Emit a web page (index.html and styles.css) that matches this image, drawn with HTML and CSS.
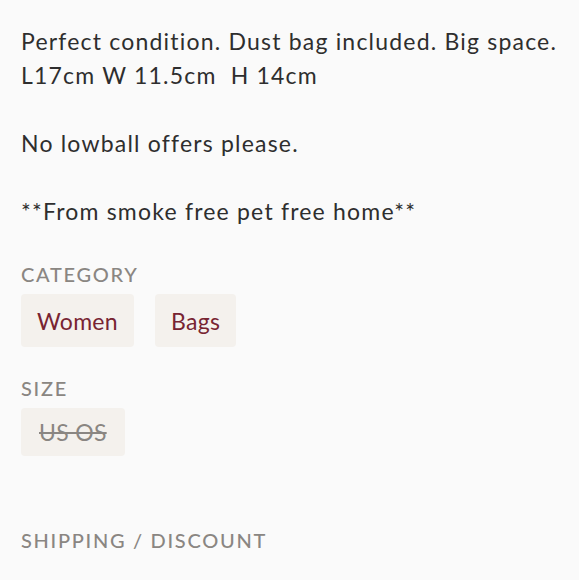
FILE: index.html
```html
<!DOCTYPE html>
<html>
<head>
<meta charset="utf-8">
<link rel="stylesheet" href="styles.css">
</head>
<body>
<main class="listing">
  <p class="description">Perfect condition. Dust bag included. Big space.
L17cm W 11.5cm  H 14cm

No lowball offers please.

**From smoke free pet free home**</p>

  <section class="section section-category">
    <h3 class="label">Category</h3>
    <div class="chips">
      <span class="chip chip-link chip-women">Women</span>
      <span class="chip chip-link chip-bags">Bags</span>
    </div>
  </section>

  <section class="section section-size">
    <h3 class="label">Size</h3>
    <div class="chips">
      <span class="chip chip-size">US OS</span>
    </div>
  </section>

  <section class="section section-shipping">
    <h3 class="label">Shipping / Discount</h3>
  </section>
</main>
</body>
</html>
```

FILE: styles.css
```css
html, body {
  margin: 0;
  padding: 0;
  background: #fafafa;
}

.listing {
  padding: 24px 0 0 21px;
  font-family: Lato, "Noto Sans", sans-serif;
  color: #2e2e2e;
}

.description {
  margin: 0;
  white-space: pre;
  font-size: 23px;
  line-height: 34px;
  font-weight: 400;
  letter-spacing: 1.2px;
}

.section-category {
  margin-top: 36px;
}

.section-size {
  margin-top: 31px;
}

.section-shipping {
  margin-top: 74px;
}

.label {
  margin: 0;
  font-size: 20px;
  line-height: 20px;
  font-weight: 500;
  text-transform: uppercase;
  letter-spacing: 1.7px;
  color: #8a8682;
}

.chips {
  display: flex;
  gap: 21px;
  margin-top: 10px;
}

.chip {
  display: inline-flex;
  align-items: center;
  background: #f4f1ed;
  border-radius: 4px;
  font-size: 23px;
  letter-spacing: 0.3px;
}

.chip-link {
  height: 53px;
  padding: 0 16px;
  color: #782432;
}

.chip-size {
  height: 48px;
  padding: 0 18px;
  color: #8a8682;
  text-decoration: line-through;
  text-decoration-thickness: 1.5px;
}
```
